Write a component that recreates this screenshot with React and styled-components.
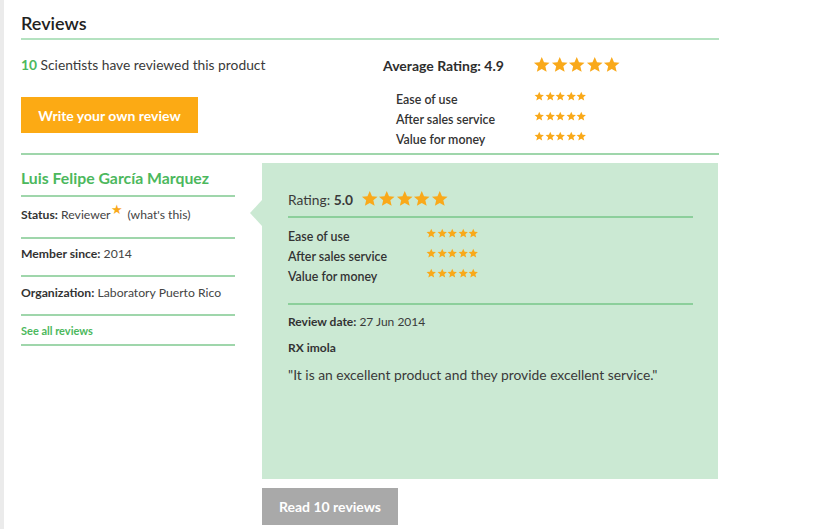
import React from 'react';
import styled, { createGlobalStyle } from 'styled-components';

const GlobalStyle = createGlobalStyle`
  body {
    margin: 0;
    background: #fff;
    font-family: Lato, "Open Sans", sans-serif;
    color: #333;
  }
`;

const Page = styled.div`
  min-height: 529px;
  box-sizing: border-box;
  border-left: 4px solid #ebebeb;
  padding: 12px 0 0 17px;
`;

const Content = styled.div`
  width: 698px;
`;

const Title = styled.h2`
  margin: 0;
  font-size: 18px;
  line-height: 22px;
  font-weight: 600;
  color: #222;
  padding-bottom: 4px;
  border-bottom: 2px solid #b4e2c0;
`;

const Summary = styled.div`
  display: flex;
  padding: 16px 0 3px;
  border-bottom: 2px solid #9fd6ab;
`;

const SummaryLeft = styled.div`
  width: 362px;
`;

const Count = styled.p`
  margin: 0;
  font-size: 13.8px;
  line-height: 18px;
  color: #3a3a3a;
  b {
    color: #4cb85d;
  }
`;

const Button = styled.button`
  display: block;
  border: 0;
  font-family: inherit;
  font-weight: 700;
  font-size: 14px;
  color: #fff;
  background: ${p => p.$bg};
  width: ${p => p.$w}px;
  height: ${p => p.$h}px;
  margin-top: ${p => p.$mt}px;
  padding: 0;
  cursor: pointer;
`;

const SummaryRight = styled.div`
  display: flex;
  flex-direction: column;
`;

const AvgRow = styled.div`
  display: flex;
  align-items: center;
  height: 18px;
  font-size: 14px;
  font-weight: 700;
  color: #2e2e2e;
  span {
    width: 150px;
  }
`;

const SubList = styled.div`
  padding: ${p => p.$pad};
`;

const SubRow = styled.div`
  display: flex;
  align-items: flex-start;
  height: 20px;
  font-size: 12.4px;
  font-weight: 600;
  color: #333;
  line-height: 20px;
  svg {
    margin-top: 1px;
  }
`;

const SubLabel = styled.span`
  width: 138px;
`;

const Main = styled.div`
  display: flex;
  gap: 27px;
  padding-top: 8px;
`;

const Profile = styled.div`
  width: 214px;
`;

const Name = styled.div`
  font-size: 15.8px;
  font-weight: 700;
  color: #4cb85d;
  line-height: 20px;
  padding: 5px 0 7px;
  border-bottom: 2px solid #9fd6ab;
`;

const InfoRow = styled.div`
  font-size: 12.2px;
  line-height: 18px;
  color: #444;
  padding: ${p => p.$pad};
  border-bottom: 2px solid #9fd6ab;
  b {
    font-weight: 700;
    color: #333;
  }
  sup {
    color: #f9a91a;
    font-size: 13px;
    line-height: 0;
    margin-right: 5px;
  }
`;

const SeeAll = styled.a`
  font-size: 11px;
  font-weight: 700;
  color: #4cb85d;
  text-decoration: none;
`;

const ReviewCol = styled.div`
  display: flex;
  flex-direction: column;
`;

const Panel = styled.div`
  position: relative;
  width: 456px;
  min-height: 316px;
  box-sizing: border-box;
  background: #cbe9d3;
  padding: 25px 25px 0 26px;
  &::before {
    content: '';
    position: absolute;
    left: -12px;
    top: 37px;
    border-style: solid;
    border-width: 13px 12px 13px 0;
    border-color: transparent #cbe9d3 transparent transparent;
  }
`;

const RatingHead = styled.div`
  display: flex;
  align-items: center;
  gap: 8px;
  height: 22px;
  padding-bottom: 6px;
  border-bottom: 2px solid #8ccf9b;
  font-size: 13.8px;
  color: #3a3a3a;
  b {
    font-weight: 700;
  }
`;

const Divided = styled.div`
  border-bottom: 2px solid #8ccf9b;
`;

const Meta = styled.p`
  margin: ${p => p.$mt}px 0 0;
  font-size: ${p => p.$size}px;
  line-height: ${p => p.$lh}px;
  color: #3a3a3a;
  b {
    font-weight: 700;
    color: #333;
  }
`;

const StarGroup = styled.span`
  display: inline-flex;
`;

const Star = ({ size }) => (
  <svg width={size} height={size} viewBox="0 0 24 24">
    <path
      fill="#f9a91a"
      d="M12 1.5l3.1 7.1 7.6.6-5.8 5 1.8 7.5L12 17.7l-6.7 4 1.8-7.5-5.8-5 7.6-.6z"
    />
  </svg>
);

const Stars = ({ size }) => (
  <StarGroup>
    {[0, 1, 2, 3, 4].map(i => (
      <Star key={i} size={size} />
    ))}
  </StarGroup>
);

const subRatings = ['Ease of use', 'After sales service', 'Value for money'];

const SubRatings = ({ pad }) => (
  <SubList $pad={pad}>
    {subRatings.map(label => (
      <SubRow key={label}>
        <SubLabel>{label}</SubLabel>
        <Stars size={10.5} />
      </SubRow>
    ))}
  </SubList>
);

const App = () => (
  <>
    <GlobalStyle />
    <Page>
      <Content>
        <Title>Reviews</Title>
        <Summary>
          <SummaryLeft>
            <Count>
              <b>10</b> Scientists have reviewed this product
            </Count>
            <Button $bg="#fcaa14" $w={177} $h={36} $mt={23}>
              Write your own review
            </Button>
          </SummaryLeft>
          <SummaryRight>
            <AvgRow>
              <span>Average Rating: 4.9</span>
              <Stars size={17.5} />
            </AvgRow>
            <SubRatings pad="16px 0 0 13px" />
          </SummaryRight>
        </Summary>
        <Main>
          <Profile>
            <Name>Luis Felipe García Marquez</Name>
            <InfoRow $pad="9px 0 13px">
              <b>Status:</b> Reviewer<sup>★</sup>(what's this)
            </InfoRow>
            <InfoRow $pad="6px 0 12px">
              <b>Member since:</b> 2014
            </InfoRow>
            <InfoRow $pad="7px 0 12px">
              <b>Organization:</b> Laboratory Puerto Rico
            </InfoRow>
            <InfoRow $pad="6px 0 4px">
              <SeeAll href="#">See all reviews</SeeAll>
            </InfoRow>
          </Profile>
          <ReviewCol>
            <Panel>
              <RatingHead>
                <span>
                  Rating: <b>5.0</b>
                </span>
                <Stars size={17.5} />
              </RatingHead>
              <Divided>
                <SubRatings pad="9px 0 16px" />
              </Divided>
              <Meta $mt={8} $size={12} $lh={18}>
                <b>Review date:</b> 27 Jun 2014
              </Meta>
              <Meta $mt={8} $size={12} $lh={18}>
                <b>RX imola</b>
              </Meta>
              <Meta $mt={8} $size={13.85} $lh={20}>
                "It is an excellent product and they provide excellent service."
              </Meta>
            </Panel>
            <Button $bg="#a9a9a9" $w={136} $h={37} $mt={9}>
              Read 10 reviews
            </Button>
          </ReviewCol>
        </Main>
      </Content>
    </Page>
  </>
);

export default App;
